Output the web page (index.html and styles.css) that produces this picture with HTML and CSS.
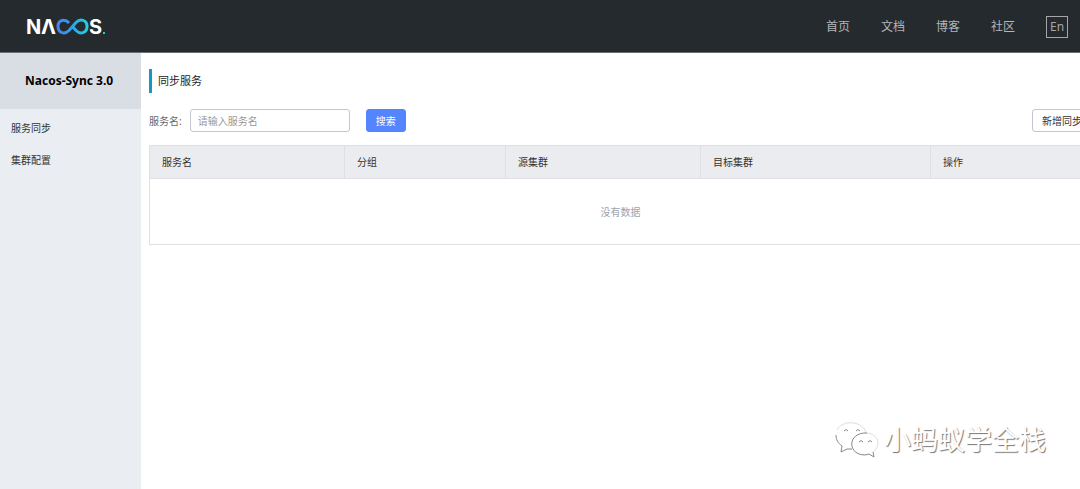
FILE: index.html
```html
<!DOCTYPE html>
<html lang="zh-CN">
<head>
<meta charset="utf-8">
<title>Nacos-Sync</title>
<link rel="stylesheet" href="styles.css">
</head>
<body>
<header class="topbar">
  <a class="logo" href="#" aria-label="Nacos">
    <svg width="82" height="24" viewBox="0 1 82 24">
      <defs>
        <linearGradient id="loop" x1="30" y1="0" x2="64" y2="0" gradientUnits="userSpaceOnUse">
          <stop offset="0" stop-color="#4c7ff0"/>
          <stop offset="0.45" stop-color="#2f9fe8"/>
          <stop offset="1" stop-color="#1fd8e0"/>
        </linearGradient>
      </defs>
      <text class="logo-text" x="0" y="20">N</text>
      <text class="logo-text" x="15" y="20">Λ</text>
      <path d="M43 9C39 4.500 32 5.500 32 12.500S39 20.500 43 16.500L50 8.500C54 4.500 61 5.500 61 12.500S54 20.500 50 16.500L46.500 12.500" fill="none" stroke="url(#loop)" stroke-width="3"/>
      <text class="logo-text" x="63" y="20">S</text>
      <rect x="77" y="18" width="2" height="2" fill="#1fd0d8"/>
    </svg>
  </a>
  <nav class="nav">
    <a href="#">首页</a>
    <a href="#">文档</a>
    <a href="#">博客</a>
    <a href="#">社区</a>
    <button class="lang" type="button">En</button>
  </nav>
</header>
<div class="layout">
  <aside class="sidebar">
    <h1 class="product">Nacos-Sync 3.0</h1>
    <nav class="menu">
      <a href="#">服务同步</a>
      <a href="#">集群配置</a>
    </nav>
  </aside>
  <main class="content">
    <h2 class="title">同步服务</h2>
    <form class="search">
      <label for="service">服务名:</label>
      <input id="service" type="text" placeholder="请输入服务名">
      <button class="primary" type="button">搜索</button>
      <button class="add" type="button">新增同步</button>
    </form>
    <table class="grid">
      <colgroup><col class="c-name"><col class="c-group"><col class="c-source"><col class="c-target"><col></colgroup>
      <thead>
        <tr><th>服务名</th><th>分组</th><th>源集群</th><th>目标集群</th><th>操作</th></tr>
      </thead>
      <tbody>
        <tr><td colspan="5">没有数据</td></tr>
      </tbody>
    </table>
  </main>
</div>
<div class="watermark">
  <svg width="44" height="38" viewBox="0 0 44 38">
    <path class="far" d="M31 12C29 0 7 -2 2 9"/>
    <path class="rim" d="M1 14C1 19 3 22 7 25L6 31L12 28L17 28"/>
    <path class="rim" d="M32 12C12 11 12 34 30 34L34 33L39 36L38 31"/>
    <path class="far" d="M38 31C47 24 43 13 32 12"/>
    <path class="rim" d="M9 10Q11 7 13 10M21 10Q23 7 25 10M24 21Q26 18 28 21M33 21Q35 18 37 21"/>
  </svg>
  <span>小蚂蚁学全栈</span>
</div>
</body>
</html>
```
FILE: styles.css
```css
* {
  box-sizing: border-box;
}

body {
  margin: 0;
  min-height: 100vh;
  display: flex;
  flex-direction: column;
  overflow: hidden;
  background: #fff;
  color: #333;
  font: 10px/16px "Noto Sans", "Noto Sans CJK SC", sans-serif;
}

a {
  color: inherit;
  text-decoration: none;
}

button,
input {
  font: inherit;
}

.topbar {
  display: flex;
  align-items: center;
  justify-content: space-between;
  height: 53px;
  padding: 1px 12px 0 26px;
  background: #252a2f;
  border-bottom: 1px solid #6b6e72;
}

.logo svg {
  display: block;
}

.logo-text {
  font: 700 20px Inter, sans-serif;
  fill: #fff;
}

.nav {
  display: flex;
  align-items: center;
  gap: 31px;
  color: #b4b6b8;
  font-size: 12px;
}

.lang {
  width: 22px;
  height: 22px;
  padding: 0;
  border: 1px solid #a4a6a8;
  background: none;
  color: #a4a6a8;
  line-height: 18px;
}

.layout {
  display: flex;
  flex: 1;
}

.sidebar {
  flex: 0 0 141px;
  background: #eaedf2;
}

.product {
  margin: 0;
  padding: 20px 0 20px 25px;
  background: #d9dde4;
  color: #000;
  font-size: 12px;
  line-height: 16px;
}

.menu {
  display: flex;
  flex-direction: column;
  gap: 16px;
  padding: 11px;
}

/* The data area keeps a usable width and is clipped in narrow windows. */
.content {
  flex: 1 0 959px;
  min-width: 0;
  padding: 16px 8px;
}

.title {
  margin: 0 0 16px;
  padding-left: 6px;
  border-left: 3px solid #1499c0;
  color: #222;
  font-size: 11px;
  font-weight: 400;
  line-height: 24px;
}

.search {
  display: flex;
  align-items: center;
  margin-bottom: 13px;
  color: #666;
}

.search input {
  width: 160px;
  height: 23px;
  margin: 0 16px 0 8px;
  padding: 0 7px;
  border: 1px solid #c4c6cf;
  border-radius: 3px;
  color: #333;
}

.search input::placeholder {
  color: #999;
}

.primary,
.add {
  height: 23px;
  padding: 0 9px;
  border: 1px solid #c4c6cf;
  border-radius: 3px;
  background: #fff;
  color: #333;
  line-height: 20px;
}

.primary {
  border-color: #5584ff;
  background: #5584ff;
  color: #fff;
}

.add {
  margin-left: auto;
}

.grid {
  width: 100%;
  table-layout: fixed;
  border-collapse: collapse;
}

.grid th,
.grid td {
  border: 1px solid #dfe0e5;
}

.grid th {
  padding: 8px 12px;
  background: #ebecf0;
  font-weight: 400;
  text-align: left;
}

.grid td {
  padding: 25px 12px 24px;
  color: #a0a2ad;
  text-align: center;
}

.c-name,
.c-source {
  width: 195px;
}

.c-group {
  width: 161px;
}

.c-target {
  width: 230px;
}

.watermark {
  position: absolute;
  right: 34px;
  bottom: 30px;
  display: flex;
  align-items: center;
  gap: 5px;
  color: #fff;
  font-size: 27px;
  line-height: 36px;
  text-shadow: 1px 1px 1px #777;
}

.rim,
.far {
  fill: none;
  stroke: #888;
}

.far {
  stroke: #ddd;
}
```
